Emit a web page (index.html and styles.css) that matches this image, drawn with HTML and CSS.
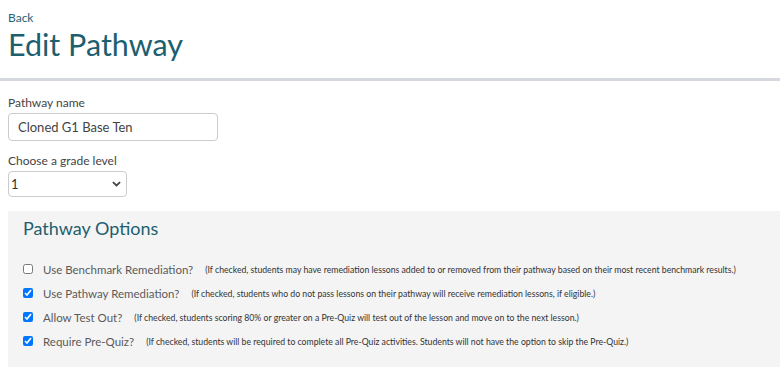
FILE: index.html
```html
<!DOCTYPE html>
<html lang="en">
  <head>
    <meta charset="UTF-8" />
    <title>Edit Pathway</title>
    <link rel="stylesheet" href="styles.css">
  </head>
  <body>
    <header class="page-header">
      <a class="back-link" href="#">Back</a>
      <h1>Edit Pathway</h1>
    </header>
    <main class="page-body">
      <div class="field">
        <label for="pathway-name">Pathway name</label>
        <input id="pathway-name" class="text-input" type="text" value="Cloned G1 Base Ten" />
      </div>
      <div class="field">
        <label for="grade-level">Choose a grade level</label>
        <div class="select-wrapper">
          <select id="grade-level" class="grade-select">
            <option>1</option>
          </select>
          <svg class="chevron" viewBox="0 0 10 6" aria-hidden="true">
            <path d="M1 1l4 3.6L9 1" />
          </svg>
        </div>
      </div>
      <section class="options-panel">
        <h2>Pathway Options</h2>
        <ul class="option-list">
          <li>
            <input type="checkbox" id="benchmark" />
            <label for="benchmark">Use Benchmark Remediation?</label>
            <span class="note">(If checked, students may have remediation lessons added to or removed from their pathway based on their most recent benchmark results.)</span>
          </li>
          <li>
            <input type="checkbox" id="remediation" checked />
            <label for="remediation">Use Pathway Remediation?</label>
            <span class="note">(If checked, students who do not pass lessons on their pathway will receive remediation lessons, if eligible.)</span>
          </li>
          <li>
            <input type="checkbox" id="test-out" checked />
            <label for="test-out">Allow Test Out?</label>
            <span class="note">(If checked, students scoring 80% or greater on a Pre-Quiz will test out of the lesson and move on to the next lesson.)</span>
          </li>
          <li>
            <input type="checkbox" id="pre-quiz" checked />
            <label for="pre-quiz">Require Pre-Quiz?</label>
            <span class="note">(If checked, students will be required to complete all Pre-Quiz activities. Students will not have the option to skip the Pre-Quiz.)</span>
          </li>
        </ul>
      </section>
    </main>
  </body>
</html>
```

FILE: styles.css
```css
body {
  margin: 0;
  font-family: "Lato", sans-serif;
  color: #444;
  background-color: white;
}
.page-header {
  padding: 10px 8px 0;
  border-bottom: 3px solid #d5d8de;
}
.back-link {
  display: block;
  font-size: 12px;
  line-height: 15px;
  color: #2a6173;
  text-decoration: none;
}
h1 {
  margin: 0;
  font-size: 30.5px;
  font-weight: normal;
  line-height: 38px;
  padding-bottom: 15px;
  color: #1d5f6f;
}
.page-body {
  padding: 14px 0 0 8px;
}
.field {
  display: flex;
  flex-direction: column;
  align-items: flex-start;
  margin-bottom: 12px;
}
.field label {
  font-size: 12px;
  line-height: 15px;
  margin-bottom: 3px;
  color: #444;
}
.text-input {
  box-sizing: border-box;
  width: 210px;
  height: 28px;
  padding: 0 9px;
  border: 1px solid #ccc;
  border-radius: 4px;
  font-family: "Lato", sans-serif;
  font-size: 13px;
  color: #444;
}
.select-wrapper {
  display: grid;
  grid-template-areas: "overlap";
  align-items: center;
}
.grade-select {
  grid-area: overlap;
  appearance: none;
  box-sizing: border-box;
  width: 119px;
  height: 26px;
  padding: 0 2px;
  border: 1px solid #ccc;
  border-radius: 4px;
  background-color: white;
  font-family: "Lato", sans-serif;
  font-size: 13px;
  color: #333;
}
.chevron {
  grid-area: overlap;
  justify-self: end;
  width: 9px;
  height: 6px;
  margin-right: 6px;
  fill: none;
  stroke: #444;
  stroke-width: 2;
  pointer-events: none;
}
.options-panel {
  margin-top: 14px;
  background-color: #f4f4f4;
  padding: 3px 15px 17px;
}
h2 {
  margin: 0;
  font-size: 18px;
  font-weight: normal;
  line-height: 28px;
  color: #1d5f6f;
}
.option-list {
  list-style: none;
  margin: 0;
  padding: 19px 0 0;
  display: flex;
  flex-direction: column;
  gap: 7.5px;
}
.option-list li {
  display: flex;
  align-items: center;
  height: 16.5px;
}
.option-list input {
  width: 10px;
  height: 10px;
  margin: 0 10px 0 0;
}
.option-list label {
  font-size: 11.5px;
  color: #5a5a5a;
}
.note {
  margin-left: 12px;
  font-size: 8.7px;
  color: #333;
}
```
